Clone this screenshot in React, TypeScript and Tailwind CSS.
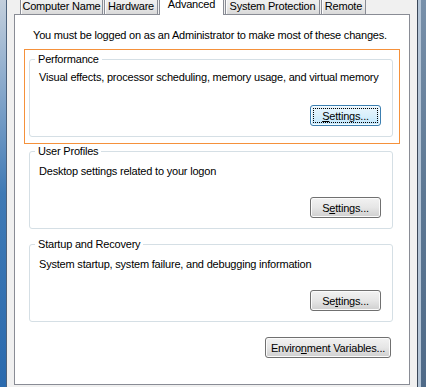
import type { ReactNode } from 'react';

function Tab({ label, w, selected }: { label: string; w: string; selected?: boolean }) {
  if (selected) {
    return (
      <div
        className={`${w} relative z-10 -mb-px mr-px flex h-[21px] items-end justify-center whitespace-nowrap border border-b-0 border-[#898c95] bg-white pb-[4px]`}
      >
        {label}
      </div>
    );
  }
  return (
    <div
      className={`${w} mr-px flex h-[18px] items-end justify-center whitespace-nowrap border border-b-0 border-[#898c95] bg-linear-to-b from-[#f2f2f2] via-[#ebebeb] to-[#d9d9d9] pb-[1px] shadow-[inset_1px_1px_0_#fcfcfc]`}
    >
      {label}
    </div>
  );
}

function Button({ children, w, focused }: { children: ReactNode; w: string; focused?: boolean }) {
  if (focused) {
    return (
      <div
        className={`${w} flex h-[21px] items-center justify-center rounded-[3px] border border-[#3c7fb1] bg-linear-to-b from-[#eaf6fd] via-[#d9f0fc] to-[#bee6fd] p-[2px] shadow-[inset_0_0_0_1px_#f4fbfe]`}
      >
        <div className="flex h-full w-full items-center justify-center border border-dotted border-black">
          {children}
        </div>
      </div>
    );
  }
  return (
    <div
      className={`${w} flex h-[21px] items-center justify-center rounded-[3px] border border-[#707070] bg-linear-to-b from-[#f2f2f2] via-[#e6e6e6] to-[#cfcfcf] shadow-[inset_0_0_0_1px_#fbfbfb]`}
    >
      {children}
    </div>
  );
}

function Group({
  title,
  text,
  textGap,
  button,
  className = '',
}: {
  title: string;
  text: string;
  textGap: string;
  button: ReactNode;
  className?: string;
}) {
  return (
    <div className={`flex h-[78px] w-[364px] flex-col rounded-[3px] border border-[#d5dfe5] ${className}`}>
      <span className="-mt-[8px] ml-[5px] self-start bg-white px-[3px]">{title}</span>
      <div className={`${textGap} ml-[9px] whitespace-nowrap`}>{text}</div>
      <div className="mt-auto mb-[10px] mr-[11px] self-end">{button}</div>
    </div>
  );
}

export default function App() {
  return (
    <div className="flex h-[387px] w-[426px] overflow-hidden bg-[#f0f0f0] font-['Liberation_Sans',Arial,sans-serif] text-[11px] leading-[14px] tracking-[-0.2px] text-black">
      {/* window frame, left */}
      <div className="w-[7px] shrink-0 border-r border-[#4d627c] bg-linear-to-b from-[#c3cfdc] via-[#3f7ab5] to-[#2a6aae]" />

      <div className="ml-[7px] flex w-[396px] shrink-0 flex-col">
        {/* tabs */}
        <div className="flex h-[14px] items-end pl-[6px]">
          <Tab label="Computer Name" w="w-[83px]" />
          <Tab label="Hardware" w="w-[54px]" />
          <Tab label="Advanced" w="w-[65px]" selected />
          <Tab label="System Protection" w="w-[95px]" />
          <Tab label="Remote" w="w-[45px]" />
        </div>

        {/* tab page */}
        <div className="flex h-[371px] flex-col border border-[#898c95] bg-white">
          <div className="ml-[18px] mt-[13px] whitespace-nowrap">
            You must be logged on as an Administrator to make most of these changes.
          </div>

          <div className="ml-[9px] mt-[7px] w-[376px] border border-[#f5913b] pb-[6px] pl-[4px] pt-[9px]">
            <Group
              title="Performance"
              text="Visual effects, processor scheduling, memory usage, and virtual memory"
              textGap="mt-[4px]"
              button={
                <Button w="w-[71px]" focused>
                  <span>
                    <span className="underline">S</span>ettings...
                  </span>
                </Button>
              }
            />
          </div>

          <Group
            className="ml-[14px] mt-[7px]"
            title="User Profiles"
            text="Desktop settings related to your logon"
            textGap="mt-[6px]"
            button={
              <Button w="w-[71px]">
                <span>
                  S<span className="underline">e</span>ttings...
                </span>
              </Button>
            }
          />

          <Group
            className="ml-[14px] mt-[15px]"
            title="Startup and Recovery"
            text="System startup, system failure, and debugging information"
            textGap="mt-[6px]"
            button={
              <Button w="w-[71px]">
                <span>
                  Se<span className="underline">t</span>tings...
                </span>
              </Button>
            }
          />

          <div className="mr-[18px] mt-[15px] self-end">
            <Button w="w-[126px]">
              <span>
                Enviro<span className="underline">n</span>ment Variables...
              </span>
            </Button>
          </div>
        </div>
      </div>

      {/* window frame, right */}
      <div className="ml-[7px] flex w-[9px] shrink-0 border-l border-[#3a4758]">
        <div className="w-[3px] bg-[#b4c5d7]" />
        <div className="flex-1 bg-linear-to-b from-[#7890aa] via-[#5d7894] to-[#4f6a88]" />
      </div>
    </div>
  );
}
